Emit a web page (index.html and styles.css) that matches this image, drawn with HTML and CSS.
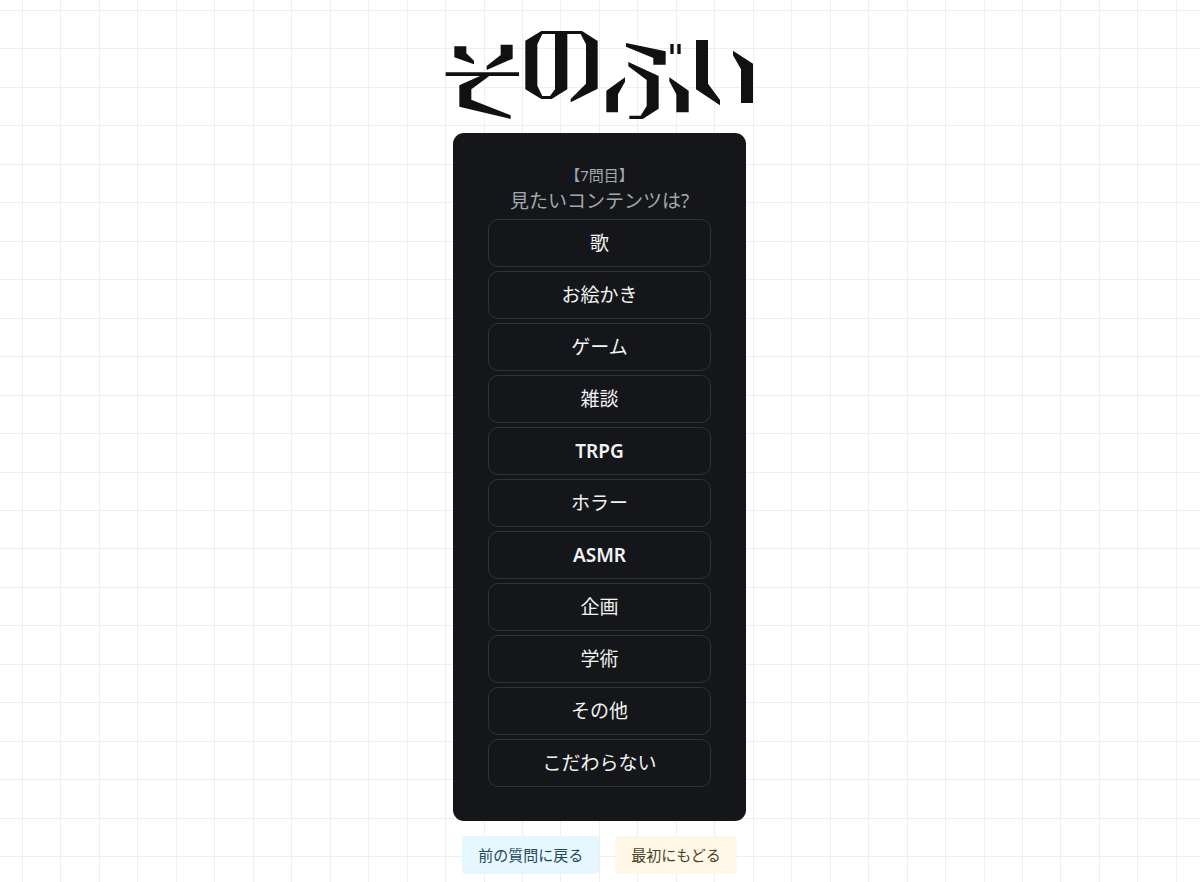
FILE: index.html
```html
<!DOCTYPE html>
<html lang="ja">
<head>
<meta charset="utf-8">
<meta name="viewport" content="width=device-width, initial-scale=1">
<title>そのぶい</title>
<link rel="stylesheet" href="styles.css">
</head>
<body>
<main class="page">
  <h1 class="brand">
    <svg class="logo" viewBox="15 27 930 276" role="img" aria-label="そのぶい">
      <path d="M43 79H79V100L102 122V133L43 112Z"/>
      <path d="M182 74H218V116L140 150V138L182 105Z"/>
      <path d="M17 157H237V168H148L94 208V239L212 286V297L58 260V196L120 168H17Z"/>
      <path fill-rule="evenodd" d="M256 62L304 33H426L473 63V206L392 247V237L438 191V73L422 42H382V208L335 237H304L256 208ZM292 73L307 42H345V208L330 228H307L292 197Z"/>
      <g transform="translate(465 0)">
        <path d="M93 69L212 94V134H175V114L93 80Z"/>
        <path d="M226 72H236V102H226ZM247 72H257V102H247Z"/>
        <path d="M100 126L191 168V266L143 297H103V287H137L155 258V180L100 139Z"/>
        <path d="M90 172V185L69 223V277H34V212Z"/>
        <path d="M223 172L281 212V277H244V223L223 184Z"/>
        <path d="M303 60H339V191L375 240V256L303 208Z"/>
        <path d="M414 92L474 131V249H438V148L414 106Z"/>
      </g>
    </svg>
  </h1>
  <section class="card" aria-labelledby="question">
    <p class="count">【7問目】</p>
    <h2 class="question" id="question">見たいコンテンツは?</h2>
    <div class="choices">
      <button class="choice" type="button">歌</button>
      <button class="choice" type="button">お絵かき</button>
      <button class="choice" type="button">ゲーム</button>
      <button class="choice" type="button">雑談</button>
      <button class="choice choice-latin" type="button">TRPG</button>
      <button class="choice" type="button">ホラー</button>
      <button class="choice choice-latin" type="button">ASMR</button>
      <button class="choice" type="button">企画</button>
      <button class="choice" type="button">学術</button>
      <button class="choice" type="button">その他</button>
      <button class="choice" type="button">こだわらない</button>
    </div>
  </section>
  <nav class="actions">
    <button class="action action-back" type="button">前の質問に戻る</button>
    <button class="action action-reset" type="button">最初にもどる</button>
  </nav>
</main>
</body>
</html>
```
FILE: styles.css
```css
* {
  box-sizing: border-box;
}

body {
  margin: 0;
  font-family: "Noto Sans", "Noto Sans CJK JP", sans-serif;
  background-color: #fff;
  background-image:
    repeating-linear-gradient(to right, #efefef 0 1px, transparent 1px calc(100% / 13)),
    repeating-linear-gradient(to bottom, #efefef 0 1px, transparent 1px calc(100% / 13));
  background-size: 500px 500px;
  background-position: 22px 10px;
}

button {
  font-family: inherit;
  cursor: pointer;
}

.page {
  display: flex;
  flex-direction: column;
  align-items: center;
  padding: 29px 1px 8px 0;
}

.brand {
  margin: 0 0 12px;
  line-height: 0;
}

.logo {
  width: 310px;
  height: 92px;
  fill: #101112;
}

.card {
  padding: 30px 35px 34px;
  border-radius: 11px;
  background: #141619;
  color: #a4a8ae;
  text-align: center;
}

.count {
  margin: 0;
  font-size: 15px;
  line-height: 24px;
}

.question {
  margin: 0 0 4px;
  font-size: 19px;
  font-weight: 400;
  line-height: 28px;
}

.choices {
  display: flex;
  flex-direction: column;
  gap: 4px;
}

.choice {
  min-width: 223px;
  height: 48px;
  padding: 0 16px;
  border: 1px solid #303236;
  border-radius: 10px;
  background: transparent;
  color: #f1f2f3;
  font-size: 19px;
  line-height: 28px;
}

.choice-latin {
  font-weight: 600;
}

.actions {
  display: flex;
  gap: 16px;
  margin-top: 15px;
}

.action {
  height: 38px;
  padding: 0 16px;
  border: 0;
  border-radius: 3px;
  font-size: 15px;
  line-height: 24px;
}

.action-back {
  background: #e7f7ff;
  color: #25485a;
}

.action-reset {
  background: #fff8e8;
  color: #4c4022;
}
```
